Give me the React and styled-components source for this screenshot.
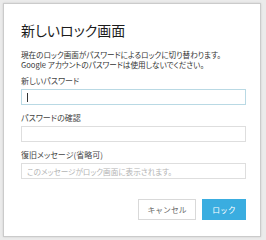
import styled, { createGlobalStyle } from 'styled-components'

const GlobalStyle = createGlobalStyle`
  html, body {
    margin: 0;
    padding: 0;
    background: #ebebeb;
  }
  * {
    box-sizing: border-box;
  }
`

const Page = styled.div`
  width: 266px;
  height: 240px;
  padding: 3px 5px 0 3px;
  font-family: "Noto Sans CJK JP", "Noto Sans", sans-serif;
  font-feature-settings: "palt";
`

const Dialog = styled.div`
  height: 234px;
  background: #fff;
  border: 1px solid #cbcbcb;
  box-shadow: 0 0 2px rgba(0, 0, 0, 0.12);
  padding: 16px 14px 16px 17px;
  display: flex;
  flex-direction: column;
`

const Title = styled.h1`
  margin: 0;
  font-size: 14px;
  font-weight: 400;
  line-height: 20px;
  color: #1c1c1c;
`

const Desc = styled.p`
  margin: 10px 0 7px;
  font-size: 7.6px;
  line-height: 9.5px;
  color: #333;
`

const Field = styled.div`
  display: flex;
  flex-direction: column;
  margin-bottom: 8px;
`

const Label = styled.label`
  font-size: 8px;
  line-height: 10px;
  color: #444;
  margin-bottom: 3px;
`

const Input = styled.div`
  height: 16px;
  border: 1px solid ${p => (p.$focused ? '#b9d9e4' : '#dedede')};
  padding: 0 5px;
  display: flex;
  align-items: center;
  font-size: 7.6px;
  color: #b4b4b4;
`

const Caret = styled.span`
  width: 1px;
  height: 9px;
  background: #333;
`

const Footer = styled.div`
  margin-top: auto;
  display: flex;
  justify-content: flex-end;
  gap: 6px;
`

const Button = styled.button`
  height: 21px;
  padding: 0;
  width: ${p => (p.$primary ? '44px' : '58px')};
  border: 1px solid ${p => (p.$primary ? '#3aade0' : '#d9d9d9')};
  background: ${p => (p.$primary ? '#3aade0' : '#fff')};
  color: ${p => (p.$primary ? '#fff' : '#666')};
  font-family: inherit;
  font-size: 7.8px;
`

function App() {
  return (
    <Page>
      <GlobalStyle />
      <Dialog>
        <Title>新しいロック画面</Title>
        <Desc>
          現在のロック画面がパスワードによるロックに切り替わります。<br />
          Google アカウントのパスワードは使用しないでください。
        </Desc>
        <Field>
          <Label>新しいパスワード</Label>
          <Input $focused><Caret /></Input>
        </Field>
        <Field>
          <Label>パスワードの確認</Label>
          <Input />
        </Field>
        <Field>
          <Label>復旧メッセージ(省略可)</Label>
          <Input>このメッセージがロック画面に表示されます。</Input>
        </Field>
        <Footer>
          <Button>キャンセル</Button>
          <Button $primary>ロック</Button>
        </Footer>
      </Dialog>
    </Page>
  )
}

export default App
